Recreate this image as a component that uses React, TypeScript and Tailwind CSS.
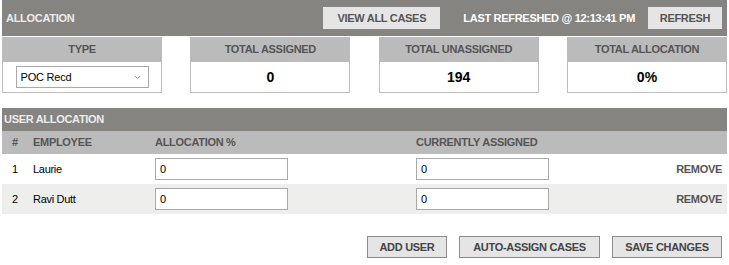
import { ChevronDown } from 'lucide-react';

const stats = [
  { label: 'TOTAL ASSIGNED', value: '0' },
  { label: 'TOTAL UNASSIGNED', value: '194' },
  { label: 'TOTAL ALLOCATION', value: '0%' },
];

const users = [
  { id: 1, name: 'Laurie', allocation: '0', assigned: '0' },
  { id: 2, name: 'Ravi Dutt', allocation: '0', assigned: '0' },
];

function StatBox({ label, children }: { label: string; children: React.ReactNode }) {
  return (
    <div className="w-[160px]">
      <div className="flex h-[25px] items-center justify-center bg-[#bbbbbb] font-bold text-[#555555]">
        {label}
      </div>
      <div className="flex h-[31px] items-center justify-center border border-t-0 border-[#bdbdbd] bg-white">
        {children}
      </div>
    </div>
  );
}

export default function App() {
  return (
    <div className="min-h-[265px] bg-white px-[2px] font-['Liberation_Sans',Arial,sans-serif] text-[11px] tracking-[-0.3px] text-black">
      <div className="flex h-[36px] items-center bg-[#868481] pl-[4px] pr-[5px]">
        <span className="font-bold text-[#ececec]">ALLOCATION</span>
        <div className="ml-auto flex items-center">
          <button className="h-[22px] w-[117px] bg-[#e5e5e5] font-bold text-[#555555]">VIEW ALL CASES</button>
          <span className="ml-[23px] font-bold text-white">LAST REFRESHED @ 12:13:41 PM</span>
          <button className="ml-[13px] h-[22px] w-[74px] bg-[#e5e5e5] font-bold text-[#555555]">REFRESH</button>
        </div>
      </div>

      <div className="mt-[1px] flex justify-between">
        <StatBox label="TYPE">
          <div className="relative w-[133px]">
            <select
              defaultValue="POC Recd"
              className="h-[22px] w-full appearance-none border border-[#a9a9a9] bg-white pl-[4px] text-[11px] tracking-[-0.2px] outline-none"
            >
              <option>POC Recd</option>
              <option>All</option>
            </select>
            <ChevronDown
              className="pointer-events-none absolute right-[7px] top-[7px] text-[#888888]"
              size={9}
              strokeWidth={2.5}
            />
          </div>
        </StatBox>
        {stats.map((s) => (
          <StatBox key={s.label} label={s.label}>
            <span className="text-[14px] font-bold tracking-normal">{s.value}</span>
          </StatBox>
        ))}
      </div>

      <div className="mt-[15px]">
        <div className="flex h-[23px] items-center bg-[#868481] pl-[2px] font-bold text-[#ececec]">USER ALLOCATION</div>
        <div className="grid h-[23px] grid-cols-[31px_122px_261px_1fr] items-center bg-[#bbbbbb] font-bold text-[#555555]">
          <span className="pl-[10px]">#</span>
          <span>EMPLOYEE</span>
          <span>ALLOCATION %</span>
          <span>CURRENTLY ASSIGNED</span>
        </div>
        {users.map((u, i) => (
          <div
            key={u.id}
            className={`grid h-[30px] grid-cols-[31px_122px_261px_1fr_auto] items-center ${i % 2 ? 'bg-[#eeeeec]' : 'bg-white'}`}
          >
            <span className="pl-[10px]">{u.id}</span>
            <span>{u.name}</span>
            <input
              defaultValue={u.allocation}
              className="h-[22px] w-[133px] border border-[#a9a9a9] bg-white pl-[4px] text-[11px] outline-none"
            />
            <input
              defaultValue={u.assigned}
              className="h-[22px] w-[133px] border border-[#a9a9a9] bg-white pl-[4px] text-[11px] outline-none"
            />
            <span className="pr-[5px] font-bold text-[#555555]">REMOVE</span>
          </div>
        ))}
      </div>

      <div className="mt-[22px] flex justify-end gap-[12px] pr-[5px]">
        <button className="h-[22px] w-[80px] border border-[#8c8c8c] bg-[#e5e5e5] font-bold text-[#444444]">ADD USER</button>
        <button className="h-[22px] w-[141px] border border-[#8c8c8c] bg-[#e5e5e5] font-bold text-[#444444]">AUTO-ASSIGN CASES</button>
        <button className="h-[22px] w-[110px] border border-[#8c8c8c] bg-[#e5e5e5] font-bold text-[#444444]">SAVE CHANGES</button>
      </div>
    </div>
  );
}
